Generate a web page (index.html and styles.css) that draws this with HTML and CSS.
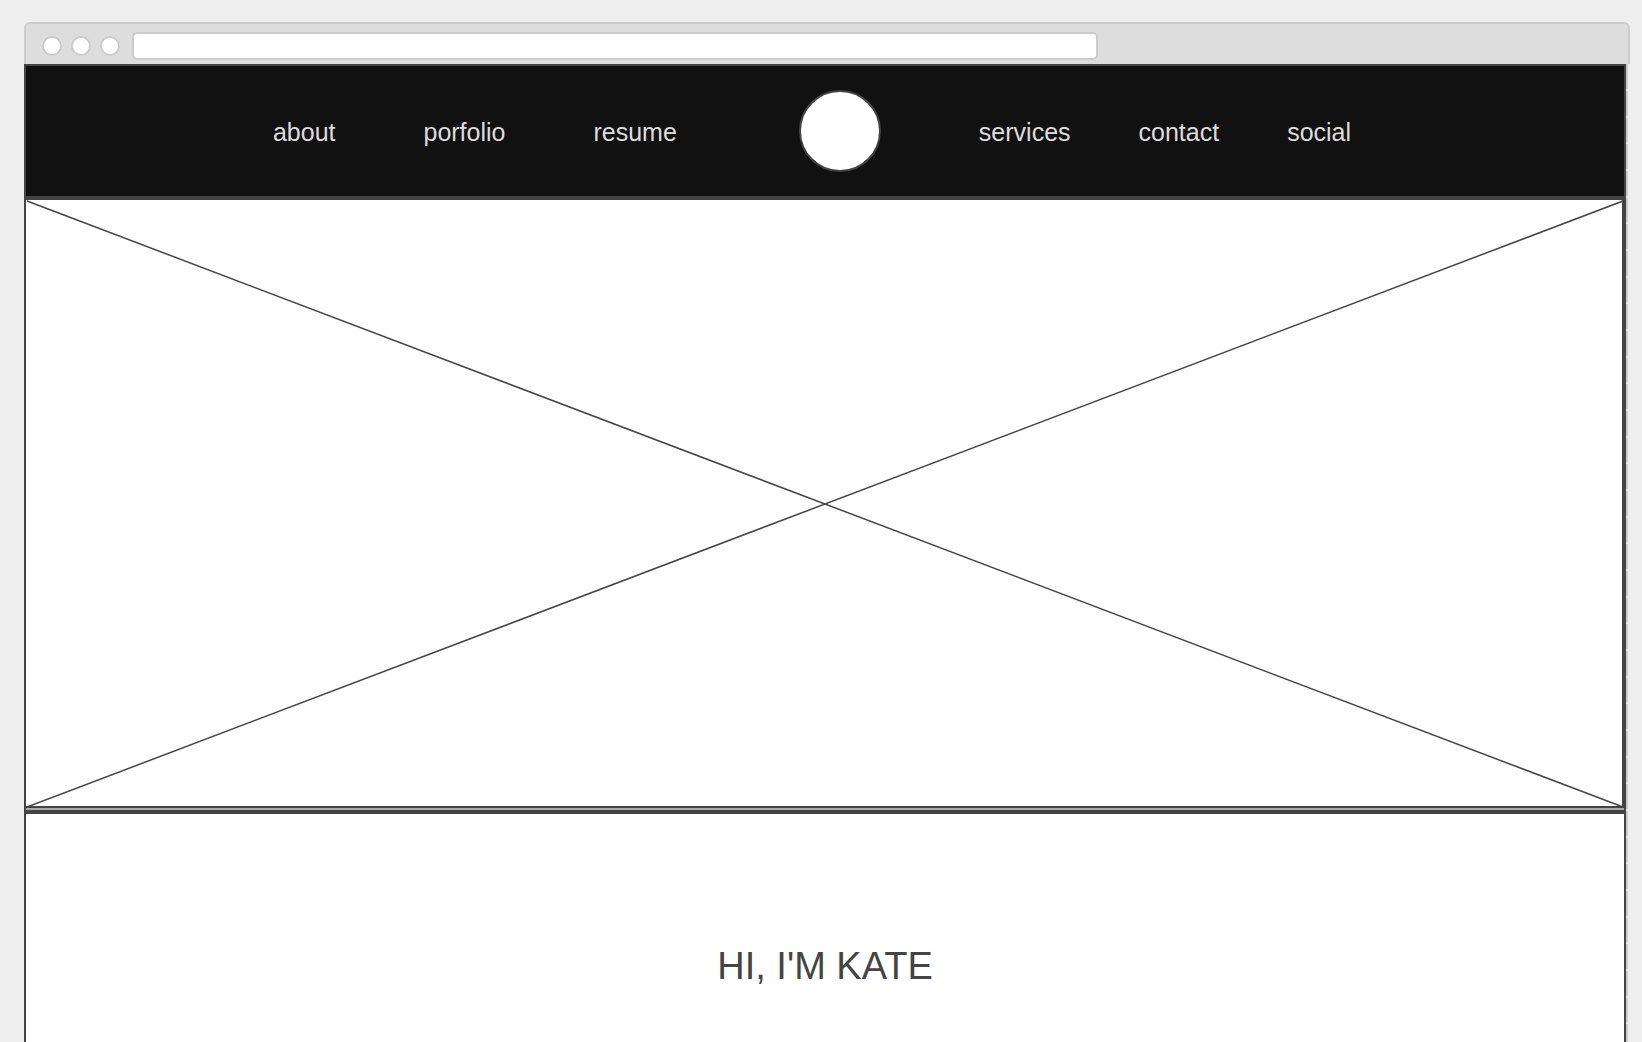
FILE: index.html
```html
<!DOCTYPE html>
<html lang="en">
<head>
<meta charset="utf-8">
<title>Kate</title>
<link rel="stylesheet" href="styles.css">
</head>
<body>
<div class="window">
  <div class="chrome">
    <button class="dot" type="button" aria-label="Close"></button>
    <button class="dot" type="button" aria-label="Minimize"></button>
    <button class="dot" type="button" aria-label="Zoom"></button>
    <input class="address" type="text" aria-label="Address">
  </div>
  <div class="viewport">
    <div class="page">
      <header class="header">
        <nav class="nav">
          <div class="links links-left">
            <a href="#about">about</a>
            <a href="#porfolio">porfolio</a>
            <a href="#resume">resume</a>
          </div>
          <a class="logo" href="#home" aria-label="Home"></a>
          <div class="links links-right">
            <a href="#services">services</a>
            <a href="#contact">contact</a>
            <a href="#social">social</a>
          </div>
        </nav>
      </header>
      <div class="hero">
        <svg class="placeholder" viewBox="0 0 1596 606" preserveAspectRatio="none" aria-hidden="true">
          <path d="M1 1L1597 607M1597 1L1 607" stroke-width="1.5"/>
        </svg>
      </div>
      <main class="intro">
        <h1>HI, I'M KATE</h1>
      </main>
    </div>
  </div>
</div>
</body>
</html>
```
FILE: styles.css
```css
* {
  box-sizing: border-box;
}

body {
  margin: 0;
  background: #eee;
  color: #444;
  font-family: "Liberation Sans", Arial, sans-serif;
}

.window {
  display: flex;
  flex-direction: column;
  min-height: 100vh;
  padding: 22px 12px 0 24px;
}

.chrome {
  display: flex;
  align-items: center;
  gap: 9px;
  height: 42px;
  padding: 4px 33% 0 16px;
  border: 2px solid #ccc;
  border-bottom: 0;
  border-radius: 6px 6px 0 0;
  background: #ddd;
}

.dot {
  flex: none;
  width: 20px;
  height: 20px;
  padding: 0;
  border: 2px solid #ccc;
  border-radius: 50%;
  background: #fff;
}

.address {
  flex: 1;
  min-width: 0;
  height: 28px;
  margin-left: 3px;
  padding: 0 8px;
  border: 2px solid #ccc;
  border-radius: 5px;
  background: #fff;
  font: inherit;
}

/* The 2px right padding shows the scroll track beside the page. */
.viewport {
  display: flex;
  flex: 1;
  margin-right: 2px;
  padding-right: 2px;
  background: repeating-linear-gradient(#ccc 0 25px, #e2e2e2 25px 27px, #ccc 27px 52px, #e2e2e2 52px 54px, #ccc 54px 78px, #e2e2e2 78px 80px);
}

.page {
  display: flex;
  flex: 1;
  flex-direction: column;
  min-width: 0;
  border: 2px solid #444;
  border-bottom: 0;
  background: #fff;
}

.header {
  padding: 24px 26px 24px 0;
  border-bottom: 4px solid #444;
  background: #111;
}

.nav {
  display: flex;
  align-items: center;
  justify-content: center;
}

.links {
  display: flex;
  padding-top: 2px;
}

.links-left {
  gap: 88px;
}

.links-right {
  gap: 68px;
}

.links a {
  color: #ddd;
  font-size: 25px;
  line-height: 28px;
  text-decoration: none;
}

.logo {
  width: 82px;
  height: 82px;
  margin: 0 98px 0 122px;
  border: 2px solid #444;
  border-radius: 50%;
  background: #fff;
}

.hero {
  padding-bottom: 2px;
  border-bottom: 4px solid #444;
  background: #aaa;
}

.placeholder {
  display: block;
  width: 100%;
  aspect-ratio: 1598 / 608;
  border: solid #444;
  border-width: 0 2px 2px 0;
  background: #fff;
}

.placeholder path {
  fill: none;
  stroke: #444;
  vector-effect: non-scaling-stroke;
}

.intro {
  flex: 1;
  padding: 130px 24px 32px;
  text-align: center;
}

.intro h1 {
  margin: 0;
  font-size: 38px;
  font-weight: 400;
  line-height: 44px;
}
```
